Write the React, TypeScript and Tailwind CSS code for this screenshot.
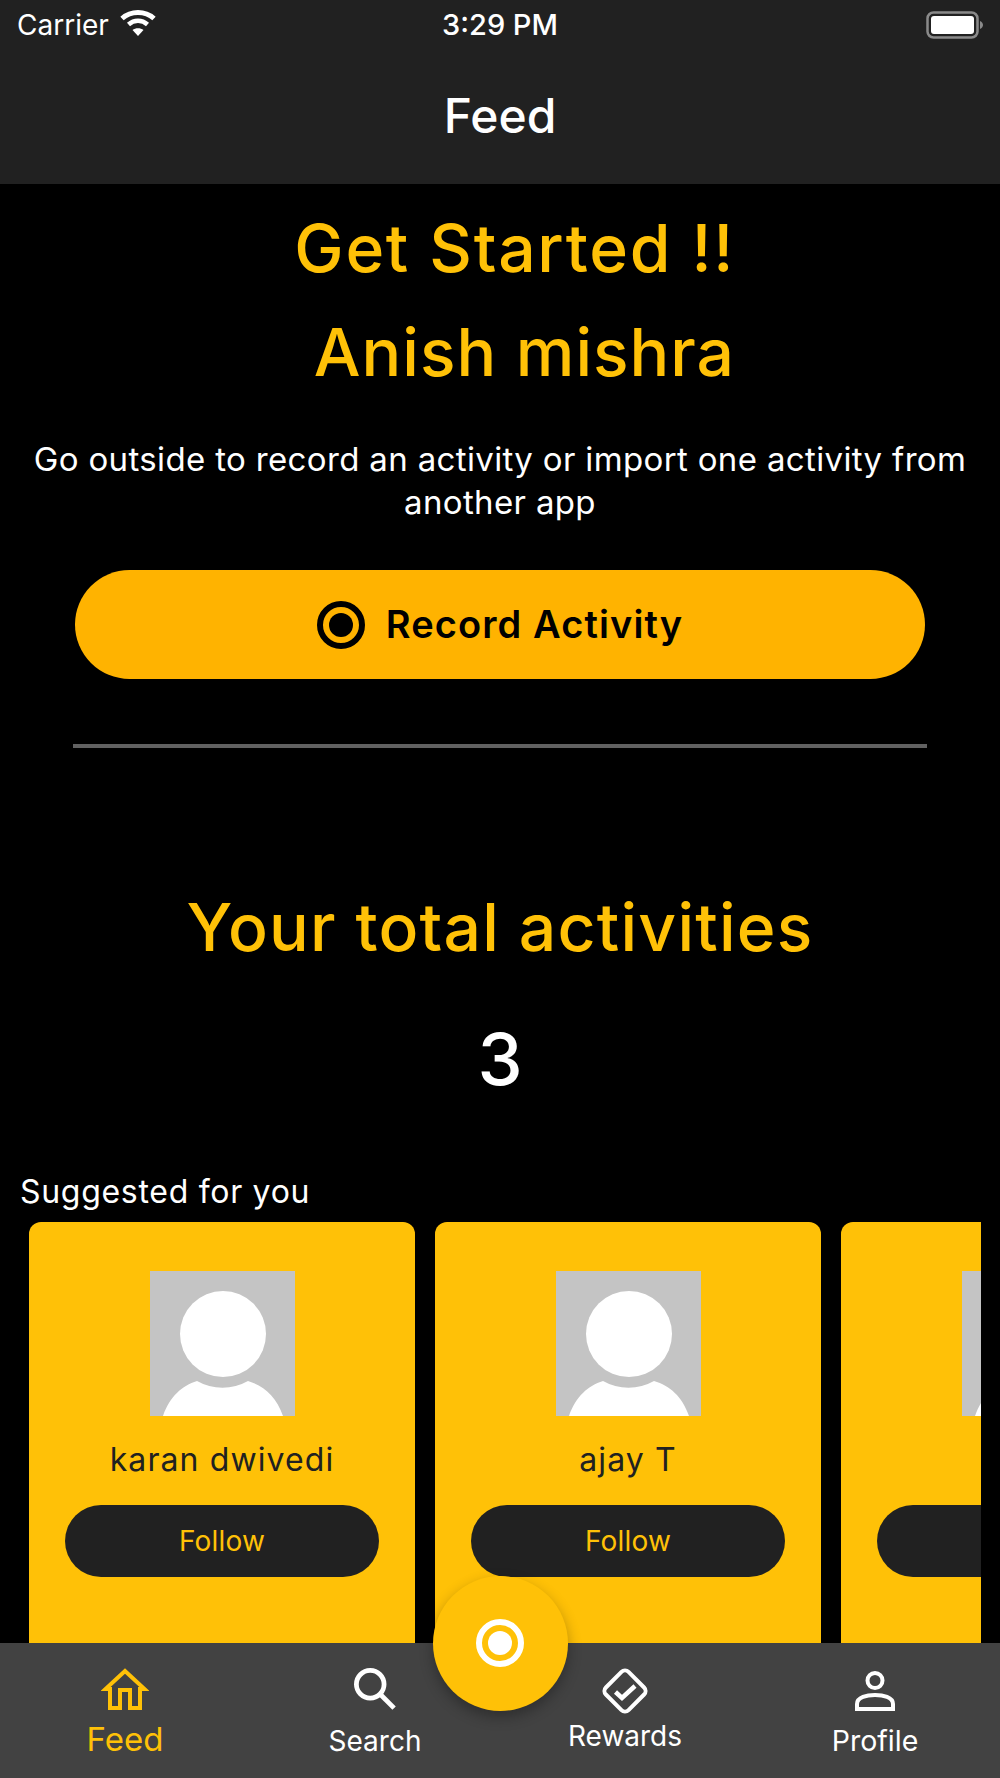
const suggested = [
  { name: 'karan dwivedi' },
  { name: 'ajay T' },
  { name: 'test3' },
]

function RecordIcon({ className }: { className: string }) {
  return (
    <svg viewBox="0 0 48 48" className={className} fill="none">
      <circle cx="24" cy="24" r="21" stroke="currentColor" strokeWidth="6" />
      <circle cx="24" cy="24" r="12" fill="currentColor" />
    </svg>
  )
}

function Avatar() {
  return (
    <div className="w-[145px] h-[145px] bg-[#c4c4c4] overflow-hidden shrink-0">
      <svg viewBox="0 0 145 145" className="w-full h-full">
        <circle cx="73" cy="63" r="43" fill="#fff" />
        <path d="M13 145C20 125 32 115 47 110A52 52 0 0 0 98 110C114 115 126 125 133 145Z" fill="#fff" />
      </svg>
    </div>
  )
}

function SuggestCard({ name }: { name: string }) {
  return (
    <div className="w-[386px] h-[460px] shrink-0 rounded-[12px] bg-[#ffc107] flex flex-col items-center pt-[49px]">
      <Avatar />
      <div className="mt-[24px] text-[32px] leading-[40px] tracking-[1.1px] text-[#212121]">{name}</div>
      <button className="mt-[25px] w-[314px] h-[72px] rounded-full bg-[#212121] text-[28px] tracking-[0.2px] text-[#ffc107]">
        Follow
      </button>
    </div>
  )
}

function TabItem({
  label,
  icon,
  className,
  labelClass,
}: {
  label: string
  icon: React.ReactNode
  className: string
  labelClass: string
}) {
  return (
    <div className={`w-[250px] flex flex-col items-center ${className}`}>
      {icon}
      <span className={`leading-[34px] ${labelClass}`}>{label}</span>
    </div>
  )
}

export default function App() {
  return (
    <div className="relative w-[1000px] h-[1778px] flex flex-col bg-black overflow-hidden font-['Inter',sans-serif] text-white">
      {/* Header */}
      <header className="h-[184px] shrink-0 bg-[#212121] flex flex-col">
        <div className="h-[50px] flex items-center justify-between pl-[17px] pr-[16px]">
          <div className="flex items-center gap-[11px]">
            <span className="text-[28px] leading-[50px]">Carrier</span>
            <svg viewBox="0 0 36 28" className="w-[36px] h-[28px] -mt-[4px]" fill="none">
              <path d="M2 9.5C11 1.5 25 1.5 34 9.5" stroke="#fff" strokeWidth="5" />
              <path d="M8.5 15.5C14 10.5 22 10.5 27.5 15.5" stroke="#fff" strokeWidth="4.5" />
              <path d="M18 27L12.5 21C15.5 18.5 20.5 18.5 23.5 21Z" fill="#fff" />
            </svg>
          </div>
          <span className="absolute left-0 w-full text-center text-[29px] font-medium leading-[52px] pointer-events-none">3:29 PM</span>
          <svg viewBox="0 0 58 28" className="w-[58px] h-[28px]" fill="none">
            <rect x="1.5" y="1.5" width="50" height="25" rx="6" stroke="#8a8a8a" strokeWidth="2.5" />
            <rect x="5" y="5" width="43" height="18" rx="3" fill="#fff" />
            <path d="M54 10C56 11 57 12.5 57 14C57 15.5 56 17 54 18Z" fill="#8a8a8a" />
          </svg>
        </div>
        <div className="flex-1 flex items-center justify-center pb-[3px]">
          <h1 className="text-[48px] font-medium leading-none">Feed</h1>
        </div>
      </header>

      {/* Scroll content */}
      <main className="flex-1 min-h-0 overflow-hidden flex flex-col items-center">
        <div className="w-[735px] self-start flex flex-col items-end">
          <h2 className="mt-[22px] h-[84px] text-[66px] leading-[84px] font-medium tracking-[1.7px] text-[#ffc107]">Get Started !!</h2>
          <h2 className="mt-[20px] h-[84px] text-[66px] leading-[84px] font-medium tracking-[1px] text-[#ffc107]">Anish mishra</h2>
        </div>
        <p className="mt-[44px] w-[960px] text-center text-[33px] leading-[43px] tracking-[0.35px]">
          Go outside to record an activity or import one activity from another app
        </p>
        <button className="mt-[46px] w-[850px] h-[109px] shrink-0 rounded-full bg-[#ffb300] flex items-center justify-center gap-[21px] text-black">
          <RecordIcon className="w-[48px] h-[48px]" />
          <span className="text-[38px] font-semibold tracking-[1.1px]">Record Activity</span>
        </button>
        <div className="mt-[65px] w-[854px] h-[4px] shrink-0 bg-[#616161]" />
        <h2 className="mt-[137px] h-[84px] text-[66px] leading-[84px] font-medium tracking-[1.2px] text-[#ffc107]">Your total activities</h2>
        <div className="mt-[48px] h-[84px] text-[72px] leading-[84px] font-medium">3</div>
        <div className="mt-[71px] w-full pl-[20px] text-[32px] leading-[40px] tracking-[0.7px]">Suggested for you</div>
        <div className="mt-[10px] w-[952px] self-start ml-[29px] flex gap-[20px] overflow-hidden">
          {suggested.map((s) => (
            <SuggestCard key={s.name} name={s.name} />
          ))}
        </div>
      </main>

      {/* Tab bar */}
      <nav className="h-[135px] shrink-0 bg-[#424242] flex">
        <TabItem
          label="Feed"
          className="pt-[25px]"
          labelClass="text-[#ffc107] text-[33px] mt-[12px]"
          icon={
            <svg viewBox="0 0 48 42" className="w-[48px] h-[42px]" fill="none" stroke="#ffc107" strokeWidth="4">
              <path d="M9 40V21H4.5L24 3L43.5 21H39V40H29V22H19V40Z" />
            </svg>
          }
        />
        <TabItem
          label="Search"
          className="pt-[25px]"
          labelClass="text-[28px] mt-[14px]"
          icon={
            <svg viewBox="0 0 44 44" className="w-[42px] h-[42px]" fill="none" stroke="#fff" strokeWidth="5">
              <circle cx="17" cy="17" r="14.5" />
              <path d="M27.5 27.5L42 42" />
            </svg>
          }
        />
        <TabItem
          label="Rewards"
          className="pt-[23px]"
          labelClass="text-[28px] mt-[3px]"
          icon={
            <svg viewBox="0 0 50 50" className="w-[50px] h-[50px]" fill="none" stroke="#fff" strokeWidth="4">
              <rect x="9" y="9" width="32" height="32" rx="5" transform="rotate(45 25 25)" />
              <path d="M15.5 26L22 32L35 20" strokeWidth="4.5" />
            </svg>
          }
        />
        <TabItem
          label="Profile"
          className="pt-[28px]"
          labelClass="text-[28.5px] mt-[13px]"
          icon={
            <svg viewBox="0 0 40 40" className="w-[40px] h-[40px]" fill="none" stroke="#fff" strokeWidth="4">
              <circle cx="20" cy="9.5" r="7.5" />
              <path d="M2 38V33C2 26 12 24 20 24C28 24 38 26 38 33V38Z" />
            </svg>
          }
        />
      </nav>

      {/* Floating record button */}
      <div className="absolute left-[432.5px] top-[1575.5px] w-[135px] h-[135px] rounded-full bg-[#ffc107] shadow-[0_6px_14px_rgba(0,0,0,0.3)] flex items-center justify-center text-white">
        <RecordIcon className="w-[48px] h-[48px]" />
      </div>
    </div>
  )
}
